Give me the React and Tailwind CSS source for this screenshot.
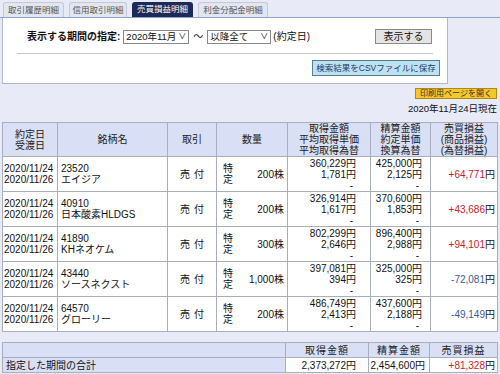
import React from 'react';

const tabs = [
  { label: '取引履歴明細', w: 'w-[61px]' },
  { label: '信用取引明細', w: 'w-[58px]' },
  { label: '売買損益明細', w: 'w-[61px]', active: true },
  { label: '利金分配金明細', w: 'w-[70px]' },
];

const rows = [
  { code: '23520', name: 'エイジア', qty: '200株', cost: '360,229円', unit: '1,781円', sale: '425,000円', price: '2,125円', pl: '+64,771円' },
  { code: '40910', name: '日本酸素HLDGS', qty: '200株', cost: '326,914円', unit: '1,617円', sale: '370,600円', price: '1,853円', pl: '+43,686円' },
  { code: '41890', name: 'KHネオケム', qty: '300株', cost: '802,299円', unit: '2,646円', sale: '896,400円', price: '2,988円', pl: '+94,101円' },
  { code: '43440', name: 'ソースネクスト', qty: '1,000株', cost: '397,081円', unit: '394円', sale: '325,000円', price: '325円', pl: '-72,081円' },
  { code: '64570', name: 'グローリー', qty: '200株', cost: '486,749円', unit: '2,413円', sale: '437,600円', price: '2,188円', pl: '-49,149円' },
];

const th = 'border border-[#a9aebd] bg-[#d9e0f5] text-center align-middle font-normal text-[#222]';
const td = 'border border-[#a9aebd] bg-white align-middle';

export default function App() {
  return (
    <div
      className="w-[500px] h-[374px] overflow-hidden bg-[#e8eaf8] text-[#111] whitespace-nowrap"
      style={{ fontFamily: '"Liberation Sans", "Noto Sans CJK JP", sans-serif' }}
    >
      {/* tabs */}
      <div className="flex items-end gap-[5px] pl-[3px] h-[18px] border-b border-[#8ea2d0]">
        {tabs.map((t) => (
          <div
            key={t.label}
            className={`${t.w} h-[15px] flex items-center justify-center rounded-t-[3px] text-[8.5px] leading-none ${
              t.active
                ? 'bg-[#1b2a57] text-white'
                : 'bg-[#e2e6ef] text-[#555] border border-b-0 border-[#c3c9d8]'
            }`}
          >
            {t.label}
          </div>
        ))}
      </div>

      {/* search panel */}
      <div className="ml-[2px] w-[446px] bg-white border-x border-b border-[#b4b8c4] pt-[11px] pb-[7px]">
        <div className="flex items-center h-[15px] pl-[24px] pr-[15px]">
          <span className="font-bold text-[10px] leading-none mr-[3px]">表示する期間の指定:</span>
          <div className="w-[66px] h-[14px] border border-[#888] flex items-center justify-between px-[2px] text-[9.5px] leading-none">
            <span>2020年11月</span>
            <span className="text-[8px]">∨</span>
          </div>
          <span className="mx-[4px] text-[10px] leading-none">～</span>
          <div className="w-[64px] h-[14px] border border-[#888] flex items-center justify-between px-[2px] text-[9.5px] leading-none">
            <span>以降全て</span>
            <span className="text-[8px]">∨</span>
          </div>
          <span className="ml-[2px] text-[10px] leading-none">(約定日)</span>
          <button className="ml-auto w-[57px] h-[15px] bg-[#e4e4e4] border border-[#8a8a8a] text-[10px] leading-none">
            表示する
          </button>
        </div>
        <div className="mx-[14px] mt-[9px] h-px bg-[#c4c4c4]" />
        <div className="flex justify-end pr-[7px] mt-[6px]">
          <button className="w-[128px] h-[16px] bg-[#bfe2f2] border border-[#5b7c99] text-[#1d3a66] text-[8.5px] leading-none px-0">
            検索結果をCSVファイルに保存
          </button>
        </div>
      </div>

      {/* print + date */}
      <div className="flex justify-end pr-[3px] mt-[4px]">
        <button className="w-[82px] h-[11px] bg-[#f4c82a] border border-[#b08a10] text-[#333] text-[8px] leading-none px-0">
          印刷用ページを開く
        </button>
      </div>
      <div className="text-right pr-[3px] mt-[4px] text-[9.5px] leading-[12px]">2020年11月24日現在</div>

      {/* main table */}
      <table className="ml-[2px] mt-[7px] w-[495px] table-fixed border-collapse text-[10px] leading-[11px]">
        <colgroup>
          <col className="w-[55px]" />
          <col className="w-[110px]" />
          <col className="w-[49px]" />
          <col className="w-[71px]" />
          <col className="w-[83px]" />
          <col className="w-[60px]" />
          <col className="w-[67px]" />
        </colgroup>
        <thead>
          <tr className="h-[34px]">
            <th className={th}>約定日<br />受渡日</th>
            <th className={th}>銘柄名</th>
            <th className={th}>取引</th>
            <th className={th}>数量</th>
            <th className={th}>取得金額<br />平均取得単価<br />平均取得為替</th>
            <th className={th}>精算金額<br />約定単価<br />換算為替</th>
            <th className={th}>売買損益<br />(商品損益)<br />(為替損益)</th>
          </tr>
        </thead>
        <tbody>
          {rows.map((r) => (
            <tr key={r.code} className="h-[35px]">
              <td className={`${td} pl-[1px] text-[10px]`}>2020/11/24<br />2020/11/26</td>
              <td className={`${td} pl-[3px]`}>
                <div>{r.code}</div>
                <div>{r.name}</div>
              </td>
              <td className={`${td} text-center tracking-[4px] pl-[4px]`}>売付</td>
              <td className={`${td} pl-[6px] pr-[3px]`}>
                <div className="flex items-center justify-between">
                  <div>特<br />定</div>
                  <div>{r.qty}</div>
                </div>
              </td>
              <td className={`${td} text-right pr-[14px]`}>
                {r.cost}<br />{r.unit}<br /><span className="pr-[3px]">-</span>
              </td>
              <td className={`${td} text-right pr-[8px]`}>
                {r.sale}<br />{r.price}<br /><span className="pr-[3px]">-</span>
              </td>
              <td className={`${td} text-right pr-[2px] ${r.pl.startsWith('+') ? 'text-[#c8202a]' : 'text-[#3a5a9c]'}`}>
                {r.pl.slice(0, -1)}<span className="text-[#111]">円</span>
              </td>
            </tr>
          ))}
        </tbody>
      </table>

      {/* summary */}
      <table className="ml-[2px] mt-[10px] w-[495px] table-fixed border-collapse text-[10px] leading-[11px]">
        <colgroup>
          <col className="w-[283px]" />
          <col className="w-[83px]" />
          <col className="w-[61px]" />
          <col className="w-[68px]" />
        </colgroup>
        <tbody>
          <tr className="h-[15px]">
            <td className="border border-[#a9aebd] bg-[#d9e0f5]" />
            <td className={`${th} tracking-[1px]`}>取得金額</td>
            <td className={`${th} tracking-[1px]`}>精算金額</td>
            <td className={`${th} tracking-[1px]`}>売買損益</td>
          </tr>
          <tr className="h-[15px]">
            <td className="border border-[#a9aebd] bg-[#d9e0f5] pl-[3px]">指定した期間の合計</td>
            <td className={`${td} text-right pr-[12px]`}>2,373,272円</td>
            <td className={`${td} text-right pr-[4px]`}>2,454,600円</td>
            <td className={`${td} text-right pr-[2px]`}>
              <span className="text-[#c8202a]">+81,328</span>円
            </td>
          </tr>
        </tbody>
      </table>
    </div>
  );
}
